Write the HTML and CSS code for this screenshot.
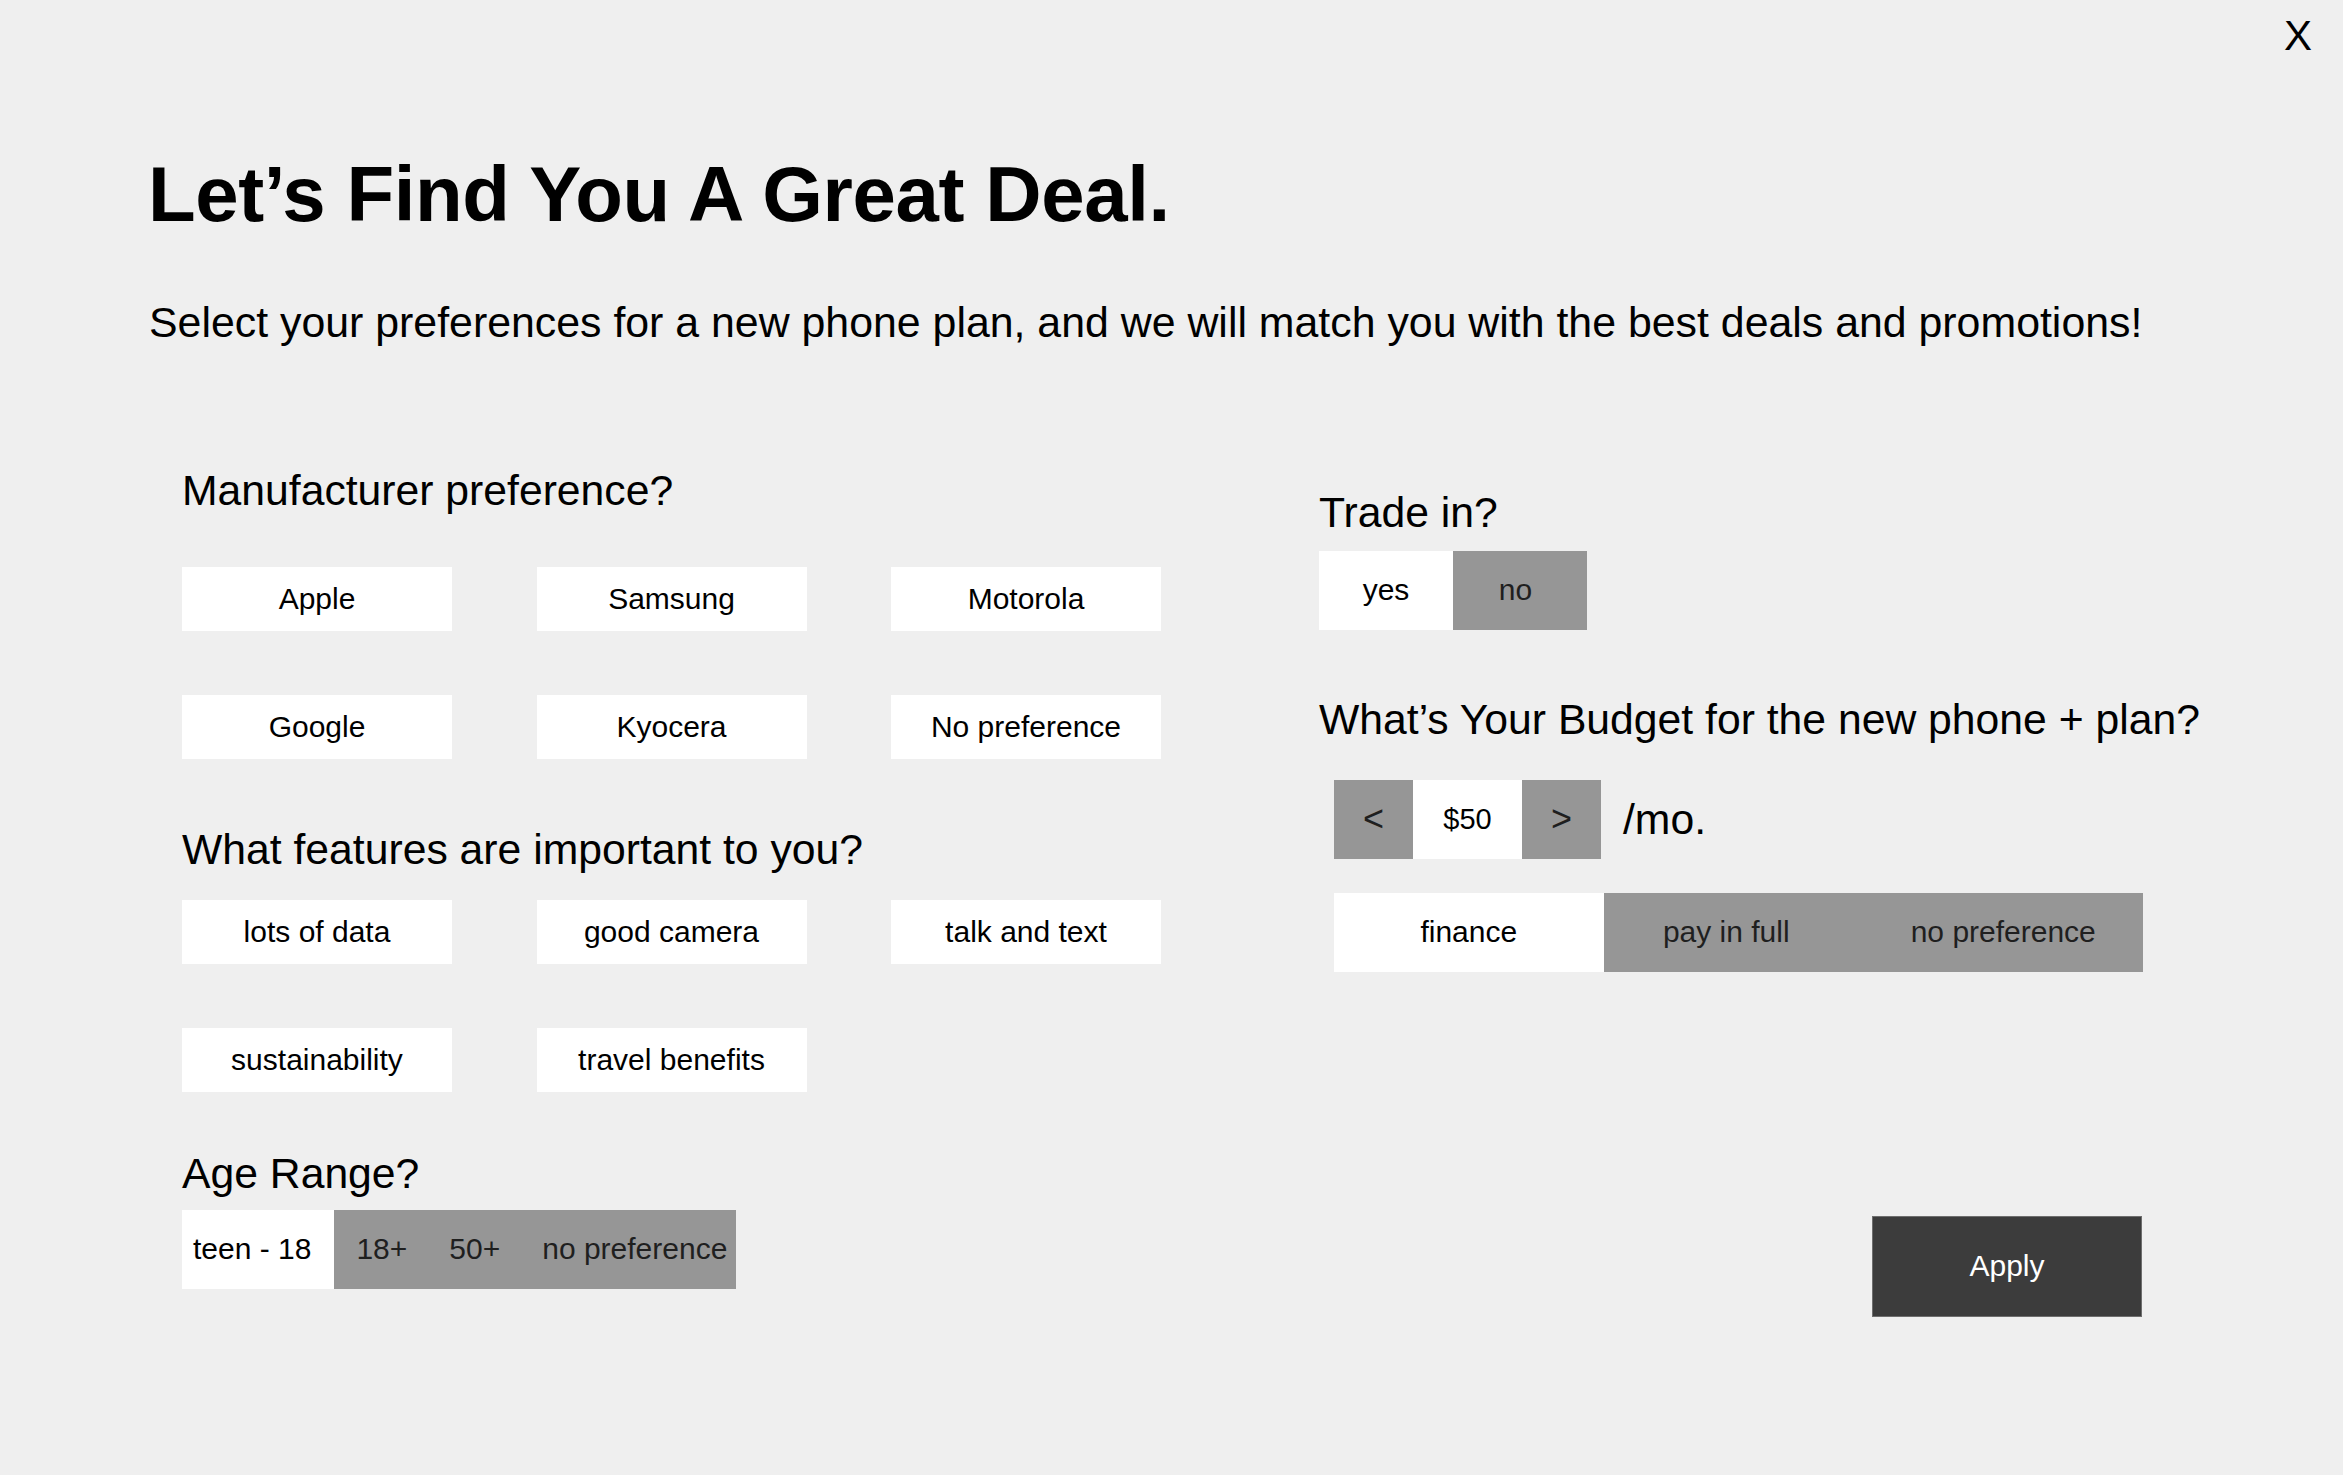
FILE: index.html
```html
<!DOCTYPE html>
<html lang="en">
<head>
<meta charset="utf-8">
<title>Let's Find You A Great Deal.</title>
<link rel="stylesheet" href="styles.css">
</head>
<body>
<div class="page">
  <button class="close" type="button">X</button>

  <header class="intro">
    <h1 class="title">Let’s Find You A Great Deal.</h1>
    <p class="subtitle">Select your preferences for a new phone plan, and we will match you with the best deals and promotions!</p>
  </header>

  <div class="columns">
    <section class="col-left">
      <h2 class="q q-manufacturer">Manufacturer preference?</h2>
      <div class="options">
        <div class="opt">Apple</div>
        <div class="opt">Samsung</div>
        <div class="opt">Motorola</div>
        <div class="opt">Google</div>
        <div class="opt">Kyocera</div>
        <div class="opt">No preference</div>
      </div>

      <h2 class="q q-features">What features are important to you?</h2>
      <div class="options options-features">
        <div class="opt">lots of data</div>
        <div class="opt">good camera</div>
        <div class="opt">talk and text</div>
        <div class="opt">sustainability</div>
        <div class="opt">travel benefits</div>
      </div>

      <h2 class="q q-age">Age Range?</h2>
      <div class="age">
        <div class="age-on">teen - 18</div>
        <div class="age-off">
          <span>18+</span>
          <span>50+</span>
          <span>no preference</span>
        </div>
      </div>
    </section>

    <section class="col-right">
      <h2 class="q q-trade">Trade in?</h2>
      <div class="seg seg-trade">
        <div class="seg-item on">yes</div>
        <div class="seg-item off trade-no">no</div>
      </div>

      <h2 class="q q-budget">What’s Your Budget for the new phone + plan?</h2>
      <div class="stepper-row">
        <div class="stepper">
          <div class="step-btn">&lt;</div>
          <div class="step-val">$50</div>
          <div class="step-btn">&gt;</div>
        </div>
        <span class="per">/mo.</span>
      </div>

      <div class="seg seg-pay">
        <div class="seg-item on">finance</div>
        <div class="seg-item off pay-full">pay in full</div>
        <div class="seg-item off pay-none">no preference</div>
      </div>

      <button class="apply" type="button">Apply</button>
    </section>
  </div>
</div>
</body>
</html>
```

FILE: styles.css
```css
* { box-sizing: border-box; }

html, body {
  margin: 0;
  padding: 0;
}

body {
  background: #efefef;
  color: #000;
  font-family: "Liberation Sans", Arial, Helvetica, sans-serif;
  width: 2343px;
  height: 1475px;
  overflow: hidden;
}

.page {
  position: relative;
  width: 2343px;
  height: 1475px;
  padding-top: 155px;
}

.close {
  position: absolute;
  top: 15px;
  right: 31px;
  margin: 0;
  padding: 0;
  border: 0;
  background: none;
  font-family: "Liberation Sans", Arial, sans-serif;
  font-size: 42px;
  line-height: 42px;
  color: #000;
  cursor: pointer;
}

.intro {
  padding-left: 148px;
}

.title {
  margin: 0;
  font-size: 78px;
  line-height: 78px;
  font-weight: 700;
  letter-spacing: -0.4px;
  white-space: nowrap;
}

.subtitle {
  margin: 67.6px 0 0 1px;
  font-size: 42.85px;
  line-height: 43px;
  white-space: nowrap;
}

.columns {
  display: flex;
  align-items: flex-start;
  padding-left: 182px;
  margin-top: 125.4px;
  gap: 157px;
}

.col-left {
  width: 980px;
  display: flex;
  flex-direction: column;
}

.col-right {
  width: 823px;
  display: flex;
  flex-direction: column;
  padding-top: 22px;
}

.q {
  margin: 0;
  font-size: 42.7px;
  line-height: 42.7px;
  font-weight: 400;
  white-space: nowrap;
}

.q-features { margin-top: 69px; }
.q-age { margin-top: 60px; }
.q-budget { margin-top: 68px; }

.options {
  display: grid;
  grid-template-columns: repeat(3, 270px);
  grid-auto-rows: 64px;
  column-gap: 84.5px;
  row-gap: 64px;
  margin-top: 55.3px;
}

.options-features {
  margin-top: 29.3px;
}

.opt {
  background: #fff;
  display: flex;
  align-items: center;
  justify-content: center;
  font-size: 30px;
  white-space: nowrap;
}

/* Age range segmented control */
.age {
  display: flex;
  align-self: flex-start;
  height: 79px;
  margin-top: 15.3px;
  font-size: 30px;
}

.age-on {
  background: #fff;
  display: flex;
  align-items: center;
  padding: 0 23px 0 11px;
  white-space: nowrap;
}

.age-off {
  background: #969696;
  color: #1f1f1f;
  display: flex;
  align-items: center;
  gap: 42px;
  padding: 0 9px 0 22px;
  white-space: nowrap;
}

/* Generic segmented control */
.seg {
  display: flex;
  align-self: flex-start;
  height: 79px;
  font-size: 30px;
}

.seg-item {
  display: flex;
  align-items: center;
  justify-content: center;
  white-space: nowrap;
}

.seg-item.on { background: #fff; color: #000; }
.seg-item.off { background: #969696; color: #1f1f1f; }

.seg-trade {
  margin-top: 17.3px;
}

.seg-trade .seg-item {
  width: 134px;
}

.seg-trade .trade-no {
  padding-right: 9px;
}

.seg-pay {
  margin-top: 34px;
  margin-left: 15px;
}

.seg-pay .seg-item {
  width: 269.5px;
}

.seg-pay .pay-full {
  padding-right: 24px;
}

.seg-pay .pay-none {
  padding-right: 9px;
}

/* Budget stepper */
.stepper-row {
  display: flex;
  align-items: center;
  margin-top: 39.3px;
  margin-left: 15px;
}

.stepper {
  display: flex;
  height: 79px;
}

.step-btn {
  width: 79px;
  background: #969696;
  color: #1f1f1f;
  display: flex;
  align-items: center;
  justify-content: center;
  font-size: 36px;
}

.step-val {
  width: 109px;
  background: #fff;
  display: flex;
  align-items: center;
  justify-content: center;
  font-size: 29px;
}

.per {
  margin-left: 22px;
  font-size: 42.7px;
  line-height: 42.7px;
}

.apply {
  align-self: flex-end;
  margin: 244px 0 0;
  width: 270px;
  height: 101px;
  padding: 0;
  background: #3c3c3c;
  border: 1px solid #6e6e6e;
  color: #fff;
  font-family: "Liberation Sans", Arial, sans-serif;
  font-size: 30px;
  cursor: pointer;
}
```
